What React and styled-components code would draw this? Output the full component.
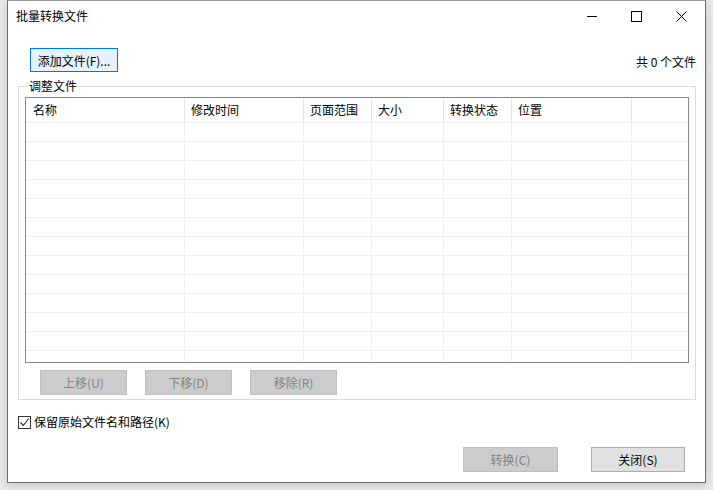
import React from "react";
import styled, { createGlobalStyle } from "styled-components";

const GlobalStyle = createGlobalStyle`
  html, body {
    margin: 0;
    padding: 0;
    background: #e9e9e9;
  }
  body {
    font-family: "Noto Sans CJK SC", "Noto Sans", sans-serif;
    font-size: 12px;
    color: #000;
  }
`;

const columns = ["名称", "修改时间", "页面范围", "大小", "转换状态", "位置", ""];
const rowCount = 13;

const App = () => {
  return (
    <>
      <GlobalStyle />
      <Desk>
        <Window>
          <TitleBar>
            <Title>批量转换文件</Title>
            <Controls>
              <CtrlBtn>
                <svg width="10" height="10" viewBox="0 0 10 10">
                  <path d="M0 5.5h10" stroke="#000" strokeWidth="1" />
                </svg>
              </CtrlBtn>
              <CtrlBtn>
                <svg width="11" height="11" viewBox="0 0 11 11">
                  <rect x="0.5" y="0.5" width="10" height="10" fill="none" stroke="#000" />
                </svg>
              </CtrlBtn>
              <CtrlBtn>
                <svg width="11" height="11" viewBox="0 0 11 11">
                  <path d="M0.5 0.5l10 10M10.5 0.5l-10 10" stroke="#000" strokeWidth="1" />
                </svg>
              </CtrlBtn>
            </Controls>
          </TitleBar>

          <Body>
            <TopRow>
              <AddButton>添加文件(F)...</AddButton>
              <Count>共 0 个文件</Count>
            </TopRow>

            <Group>
              <Legend>调整文件</Legend>
              <Table>
                <HeadRow>
                  {columns.map((c, i) => (
                    <HeadCell key={i} $last={i === columns.length - 1}>
                      {c}
                    </HeadCell>
                  ))}
                </HeadRow>
                {Array.from({ length: rowCount }).map((_, r) => (
                  <Row key={r}>
                    {columns.map((_, i) => (
                      <Cell key={i} $last={i === columns.length - 1} />
                    ))}
                  </Row>
                ))}
              </Table>
              <MoveRow>
                <GrayButton disabled>上移(U)</GrayButton>
                <GrayButton disabled>下移(D)</GrayButton>
                <GrayButton disabled>移除(R)</GrayButton>
              </MoveRow>
            </Group>

            <CheckRow>
              <CheckBox>
                <svg width="11" height="11" viewBox="0 0 11 11">
                  <path d="M1.5 5.5l2.8 3 5.5-7" fill="none" stroke="#222" strokeWidth="1.1" />
                </svg>
              </CheckBox>
              <span>保留原始文件名和路径(K)</span>
            </CheckRow>

            <Footer>
              <ActionButton disabled $w={95}>
                转换(C)
              </ActionButton>
              <ActionButton $w={94}>关闭(S)</ActionButton>
            </Footer>
          </Body>
        </Window>
      </Desk>
    </>
  );
};

const Desk = styled.div`
  width: 713px;
  height: 490px;
  padding-left: 7px;
  box-sizing: border-box;
  overflow: hidden;
`;

const Window = styled.div`
  width: 699px;
  height: 483px;
  box-sizing: border-box;
  background: #fff;
  border: 1px solid #6e6e6e;
  border-top-color: #9a9a9a;
  box-shadow: 0 2px 8px rgba(0, 0, 0, 0.18);
  display: flex;
  flex-direction: column;
`;

const TitleBar = styled.div`
  height: 30px;
  display: flex;
  align-items: center;
  justify-content: space-between;
`;

const Title = styled.div`
  padding-left: 8px;
  font-size: 12px;
  line-height: 16px;
`;

const Controls = styled.div`
  display: flex;
  height: 100%;
  margin-right: 1px;
`;

const CtrlBtn = styled.div`
  width: 45px;
  height: 100%;
  display: flex;
  align-items: center;
  justify-content: center;
`;

const Body = styled.div`
  display: flex;
  flex-direction: column;
  padding: 0 9px 0 10px;
`;

const TopRow = styled.div`
  margin-top: 17px;
  display: flex;
  justify-content: space-between;
  align-items: flex-end;
  padding-left: 12px;
`;

const AddButton = styled.button`
  width: 88px;
  height: 24px;
  padding: 0;
  font: inherit;
  font-size: 12px;
  color: #000;
  background: #e5f1fb;
  border: 1px solid #0078d7;
  box-sizing: border-box;
`;

const Count = styled.span`
  line-height: 16px;
  padding-bottom: 2px;
`;

const Group = styled.fieldset`
  margin: 6px 0 0 0;
  padding: 0 6px 5px 6px;
  border: 1px solid #dcdcdc;
  height: 322px;
  box-sizing: border-box;
  min-width: 0;
`;

const Legend = styled.legend`
  margin-left: 3px;
  padding: 0 1px;
  line-height: 16px;
  font-size: 12px;
`;

const Table = styled.div`
  margin-top: 3px;
  height: 266px;
  box-sizing: border-box;
  border: 1px solid #828790;
  overflow: hidden;
`;

const grid = `159px 119px 68px 72px 68px 120px 1fr`;

const HeadRow = styled.div`
  display: grid;
  grid-template-columns: ${grid};
  height: 25px;
  box-sizing: border-box;
  border-bottom: 1px solid #f0f0f0;
`;

const HeadCell = styled.div`
  padding-left: 6px;
  line-height: 24px;
  border-right: ${(p) => (p.$last ? "none" : "1px solid #e5e5e5")};
  white-space: nowrap;
  &:first-child {
    padding-left: 7px;
  }
`;

const Row = styled.div`
  display: grid;
  grid-template-columns: ${grid};
  height: 19px;
  box-sizing: border-box;
  border-bottom: 1px solid #f0f0f0;
`;

const Cell = styled.div`
  border-right: ${(p) => (p.$last ? "none" : "1px solid #f0f0f0")};
`;

const MoveRow = styled.div`
  margin-top: 7px;
  padding-left: 15px;
  display: flex;
  gap: 18px;
`;

const GrayButton = styled.button`
  width: 87px;
  height: 25px;
  padding: 0;
  font: inherit;
  font-size: 12px;
  color: #838383;
  background: #cccccc;
  border: 1px solid #bfbfbf;
  box-sizing: border-box;
`;

const CheckRow = styled.div`
  margin-top: 14px;
  display: flex;
  align-items: center;
  gap: 3px;
  line-height: 16px;
`;

const CheckBox = styled.div`
  width: 13px;
  height: 13px;
  box-sizing: border-box;
  border: 1px solid #333;
  display: flex;
  align-items: center;
  justify-content: center;
`;

const Footer = styled.div`
  margin-top: 17px;
  display: flex;
  justify-content: flex-end;
  gap: 33px;
  padding-right: 11px;
`;

const ActionButton = styled.button`
  width: ${(p) => p.$w}px;
  height: 25px;
  padding: 0;
  font: inherit;
  font-size: 12px;
  color: #000;
  background: #e1e1e1;
  border: 1px solid #adadad;
  box-sizing: border-box;
  &:disabled {
    color: #838383;
    background: #cccccc;
    border-color: #bfbfbf;
  }
`;

export default App;
